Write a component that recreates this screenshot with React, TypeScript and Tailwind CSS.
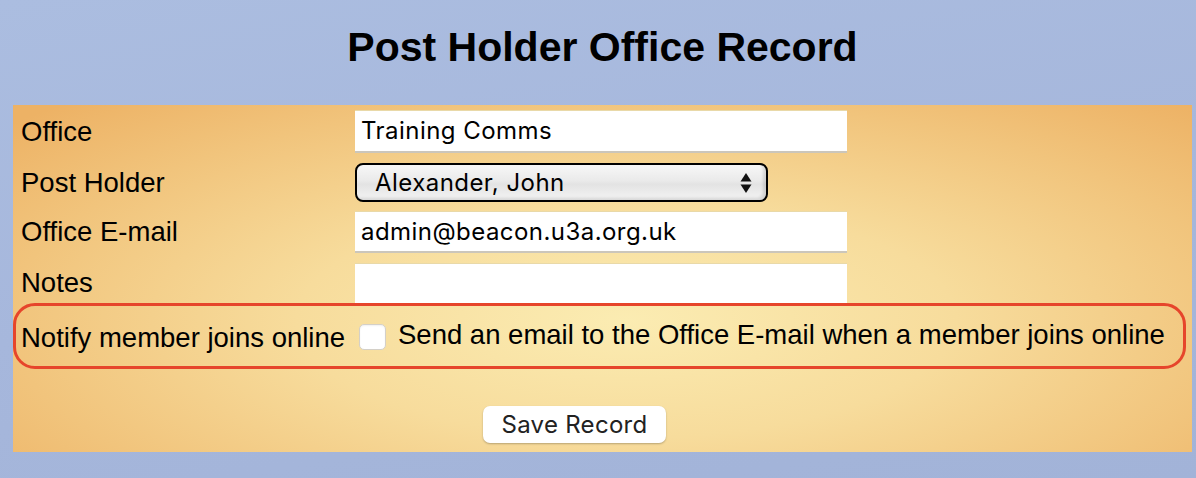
import React from 'react';

const label = "w-[334px] shrink-0 pl-[8px] text-[27.5px] leading-none text-black";
const field = "font-['Inter',sans-serif] text-[24px] tracking-[0.45px] text-black";

function TextBox({ value, height = 'h-[43px]' }: { value?: string; height?: string }) {
  return (
    <div
      className={`${height} w-[492px] bg-white border-t border-t-[#e9d9a8] border-b-2 border-b-[#cbc6bb] flex items-center px-[6px] ${field}`}
    >
      {value}
    </div>
  );
}

function Arrows() {
  return (
    <svg width="12" height="22" viewBox="0 0 12 22">
      <path d="M6 1 L11.5 9.5 L0.5 9.5 Z" fill="#111" />
      <path d="M6 21 L11.5 12.5 L0.5 12.5 Z" fill="#111" />
    </svg>
  );
}

export default function App() {
  return (
    <div className="min-h-[478px] w-[1196px] bg-[linear-gradient(170deg,#abbde0_0%,#a6b7dc_50%,#a2b3d8_100%)] font-['Liberation_Sans',Arial,sans-serif] overflow-hidden">
      <div className="h-[94px] w-[1179px] ml-[13px] flex items-center justify-center">
        <h1 className="text-[41px] font-bold leading-none text-black">Post Holder Office Record</h1>
      </div>

      <div className="mt-[11px] ml-[13px] w-[1179px] h-[347px] bg-[radial-gradient(ellipse_70%_85%_at_52%_62%,#fbecb2_0%,#f7dc9c_40%,#f1c47c_75%,#edb265_100%)] pt-[5px] flex flex-col">
        <div className="flex items-center h-[43px]">
          <div className={label}>Office</div>
          <div className="pl-[8px]">
            <TextBox value="Training Comms" />
          </div>
        </div>

        <div className="flex items-center h-[39px] mt-[10px]">
          <div className={label}>Post Holder</div>
          <div className="pl-[8px]">
            <div className={`h-[39px] w-[413px] rounded-[8px] border-2 border-black bg-[linear-gradient(180deg,#f7f7f7_0%,#eaeaea_45%,#e3e3e3_55%,#f4f4f4_100%)] shadow-[inset_-3px_-2px_3px_rgba(0,0,0,0.12)] flex items-center justify-between pl-[18px] pr-[14px] ${field}`}>
              <span>Alexander, John</span>
              <Arrows />
            </div>
          </div>
        </div>

        <div className="flex items-center h-[42px] mt-[9px]">
          <div className={label}>Office E-mail</div>
          <div className="pl-[8px]">
            <TextBox value="admin@beacon.u3a.org.uk" height="h-[42px]" />
          </div>
        </div>

        <div className="flex items-center h-[40px] mt-[10px]">
          <div className={label}>Notes</div>
          <div className="pl-[8px] self-start">
            <div className="h-[40px] w-[492px] bg-white border-t border-t-[#e9d9a8]" />
          </div>
        </div>

        <div className="w-[1173px] h-[66px] rounded-[22px] border-[3px] border-[#e6452b] flex items-center">
          <div className="w-[339px] shrink-0 pl-[5px] pt-[3px] text-[27.5px] leading-none text-black whitespace-nowrap">
            Notify member joins online
          </div>
          <div className="ml-[4px] mt-[2px] h-[26px] w-[27px] shrink-0 rounded-[5px] bg-white border border-[#d4d0c8] shadow-[inset_0_1px_2px_rgba(0,0,0,0.06)]" />
          <div className="ml-[12px] pb-[3px] text-[27.5px] leading-none text-black whitespace-nowrap">
            Send an email to the Office E-mail when a member joins online
          </div>
        </div>

        <div className="mt-[37px] pl-[470px]">
          <button className="h-[37px] w-[183px] rounded-[7px] bg-white shadow-[0_1px_2px_rgba(0,0,0,0.25)] font-['Inter',sans-serif] text-[24px] tracking-[0.3px] text-[#222]">
            Save Record
          </button>
        </div>
      </div>
    </div>
  );
}
